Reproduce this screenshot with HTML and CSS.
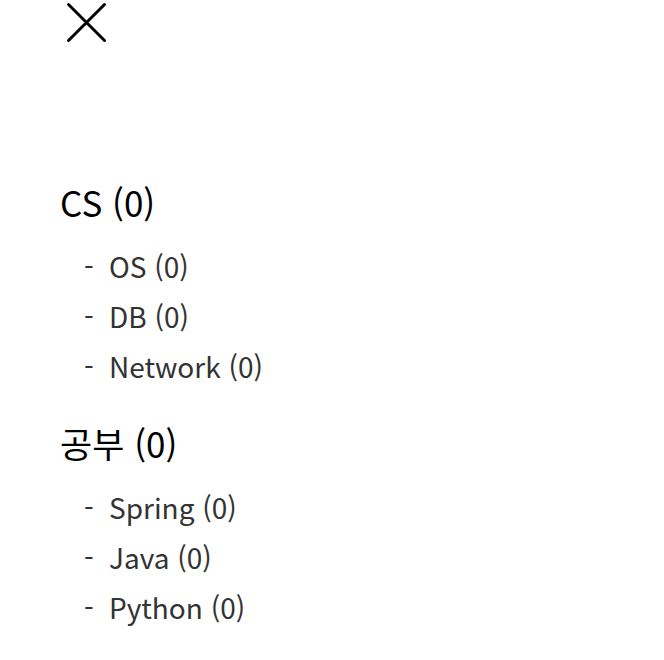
FILE: index.html
```html
<!DOCTYPE html>
<html lang="ko">
<head>
<meta charset="utf-8">
<link rel="stylesheet" href="styles.css">
</head>
<body>
<div class="drawer">
  <div class="drawer-top">
    <button class="close-btn" aria-label="닫기">
      <svg width="42" height="42" viewBox="0 0 42 42"><path d="M2.5 2.5 L38.5 38.5 M38.5 2.5 L2.5 38.5" stroke="#000" stroke-width="3" stroke-linecap="round" fill="none"/></svg>
    </button>
  </div>
  <nav class="categories">
    <section class="category">
      <h2 class="category-title">CS (0)</h2>
      <ul class="sub-list">
        <li class="sub-item"><span class="dash">-</span><span>OS (0)</span></li>
        <li class="sub-item"><span class="dash">-</span><span>DB (0)</span></li>
        <li class="sub-item"><span class="dash">-</span><span>Network (0)</span></li>
      </ul>
    </section>
    <section class="category">
      <h2 class="category-title">공부 (0)</h2>
      <ul class="sub-list">
        <li class="sub-item"><span class="dash">-</span><span>Spring (0)</span></li>
        <li class="sub-item"><span class="dash">-</span><span>Java (0)</span></li>
        <li class="sub-item"><span class="dash">-</span><span>Python (0)</span></li>
      </ul>
    </section>
  </nav>
</div>
</body>
</html>
```
FILE: styles.css
```css
html, body {
  margin: 0;
  padding: 0;
  background: #fff;
}
body {
  font-family: "Noto Sans CJK KR", "Noto Sans", sans-serif;
  color: #000;
}
.drawer {
  padding-left: 60px;
}
.drawer-top {
  height: 46px;
  display: flex;
  align-items: flex-start;
}
.close-btn {
  margin: 2px 0 0 6px;
  padding: 0;
  border: 0;
  background: none;
  width: 42px;
  height: 42px;
  display: block;
}
.close-btn svg {
  display: block;
}
.categories {
  margin-top: 136px;
  display: flex;
  flex-direction: column;
  gap: 32px;
}
.category-title {
  margin: 0;
  font-size: 35px;
  font-weight: 400;
  line-height: 40px;
  color: #000;
}
.sub-list {
  list-style: none;
  margin: 19px 0 0;
  padding: 0 0 0 24px;
}
.sub-item {
  display: flex;
  font-size: 28px;
  line-height: 50px;
  color: #333;
}
.dash {
  width: 25px;
  flex: none;
}
```
